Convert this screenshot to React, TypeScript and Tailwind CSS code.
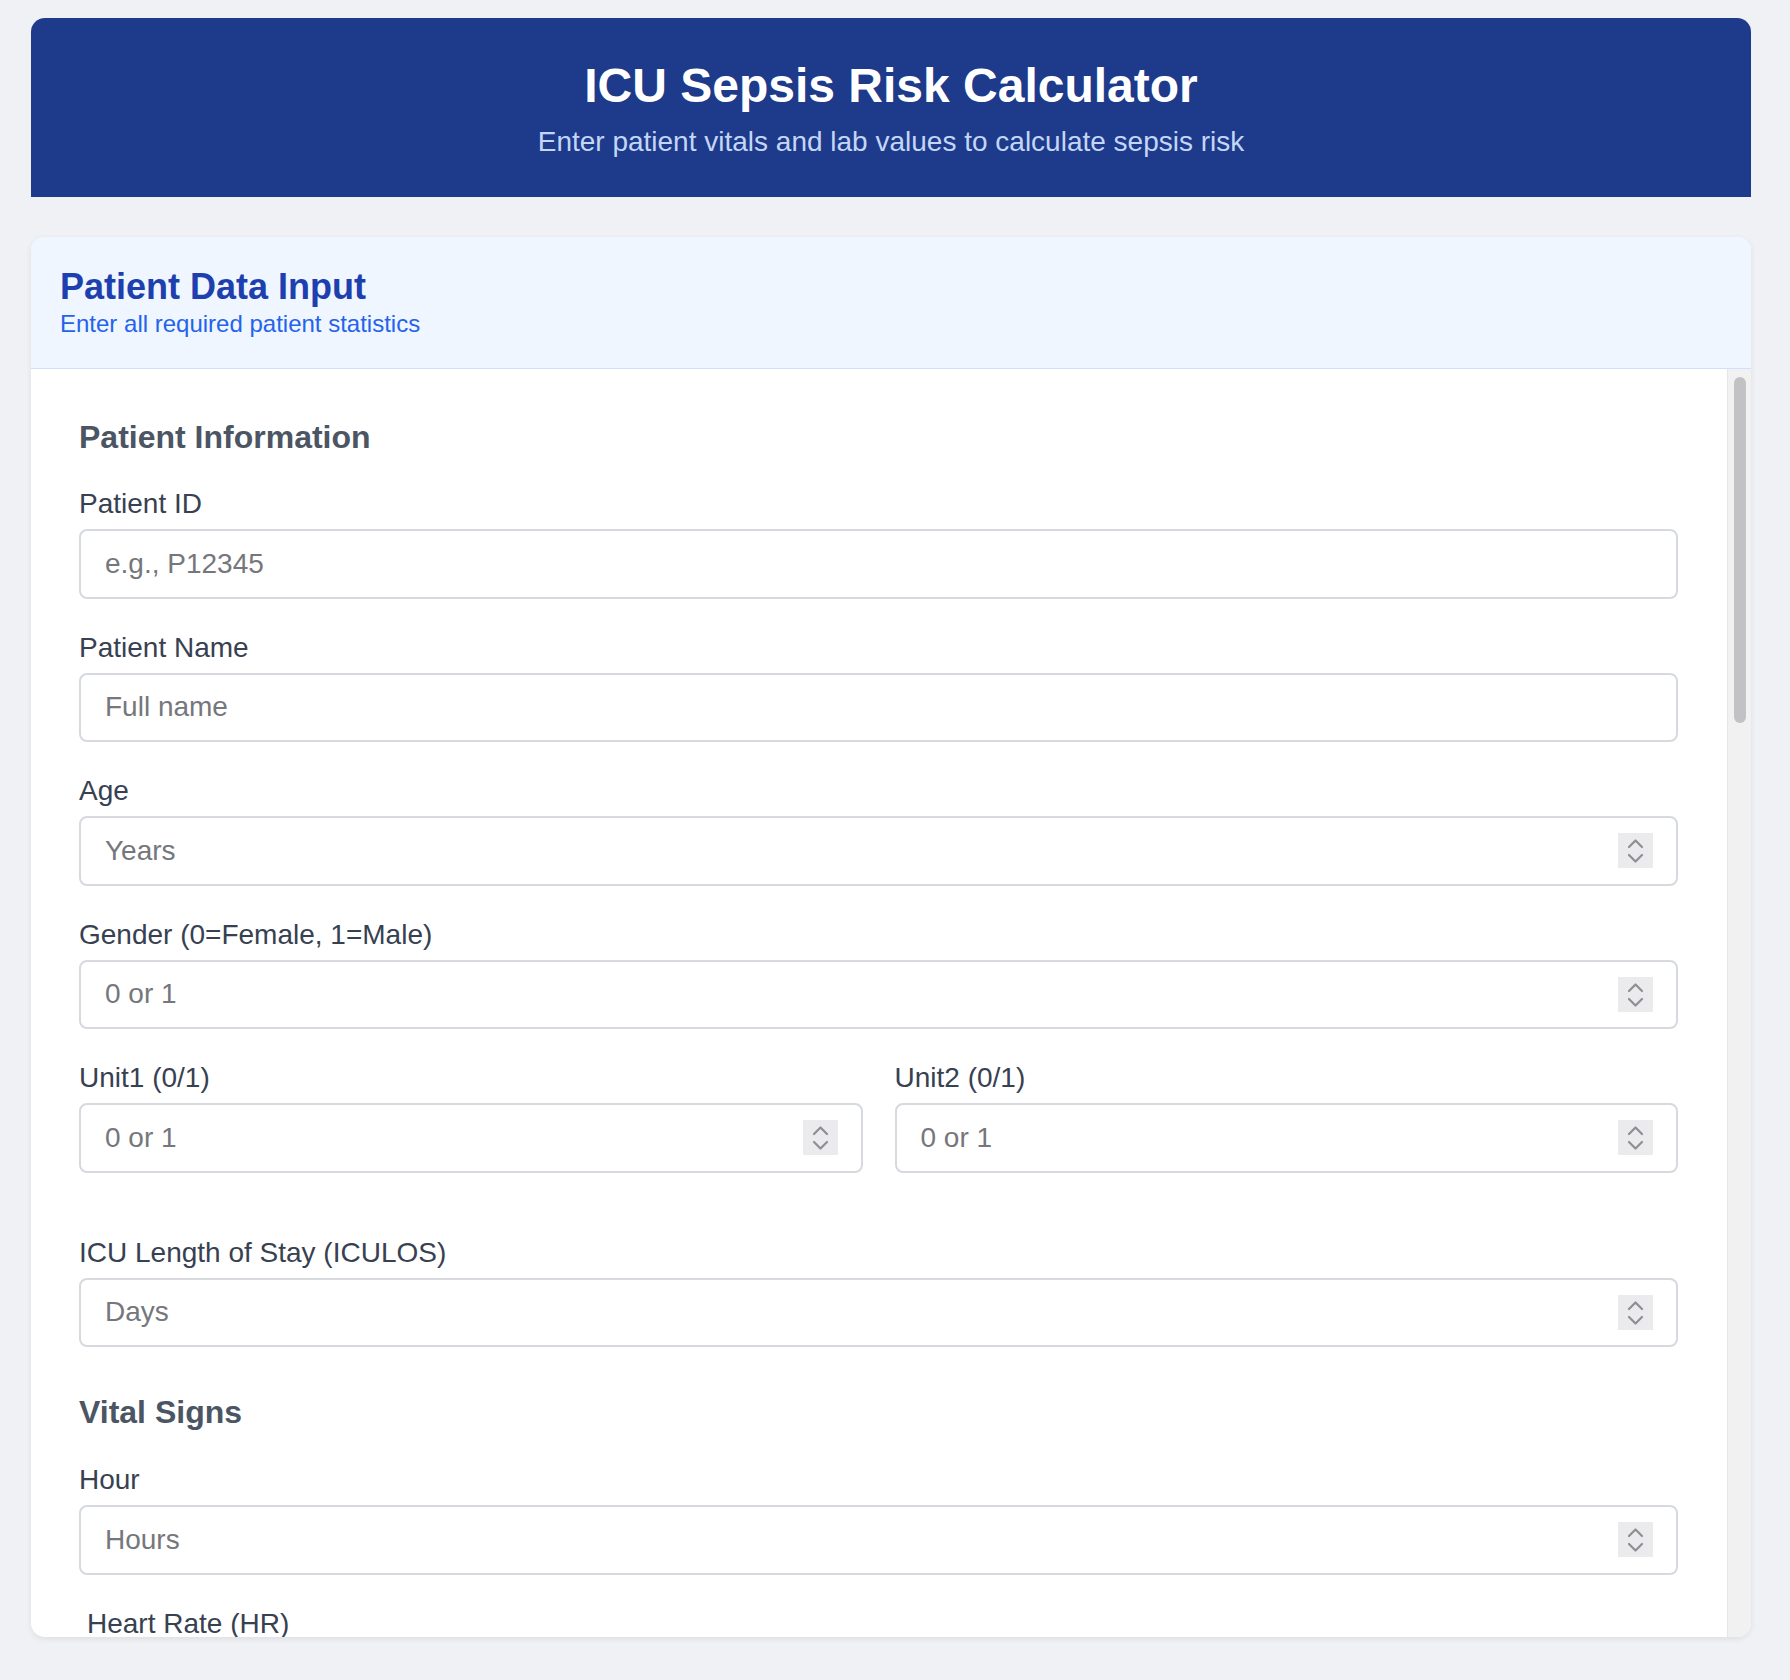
import React from "react";

const Spinner = () => {
  return (
    <div className="flex h-[35px] w-[35px] shrink-0 items-center justify-center bg-[#ebebed]">
      <svg width="35" height="35" viewBox="0 0 35 35" fill="none">
        <path d="M11 14 L17.5 7.5 L24 14" stroke="#8e8e93" strokeWidth="2.2" strokeLinecap="round" strokeLinejoin="round" />
        <path d="M11 22 L17.5 28.5 L24 22" stroke="#8e8e93" strokeWidth="2.2" strokeLinecap="round" strokeLinejoin="round" />
      </svg>
    </div>
  );
};

type FieldProps = {
  label: string;
  placeholder: string;
  numeric?: boolean;
};

const Field = ({ label, placeholder, numeric }: FieldProps) => {
  return (
    <div className="flex flex-col">
      <label className="mb-[8px] text-[28px] leading-[34px] text-[#374151]">{label}</label>
      <div className="flex h-[69.5px] items-center rounded-[8px] border-2 border-[#d6d9de] bg-white pl-[24px] pr-[23px]">
        <input
          type="text"
          inputMode={numeric ? "numeric" : "text"}
          placeholder={placeholder}
          className="min-w-0 flex-1 bg-transparent text-[28px] text-[#111827] outline-none placeholder:text-[#75777c]"
        />
        {numeric && <Spinner />}
      </div>
    </div>
  );
};

const App = () => {
  return (
    <div className="min-h-[1680px] bg-[#f0f1f4] pl-[31px] pr-[39px] pt-[18px] font-['Liberation_Sans',Arial,sans-serif]">
      <header className="rounded-t-[14px] bg-[#1e3a8a] pb-[37px] pt-[39px] text-center">
        <h1 className="text-[48px] font-bold leading-[58px] text-white">ICU Sepsis Risk Calculator</h1>
        <p className="mt-[9px] text-[28px] leading-[36px] text-[#c3d6f7]">
          Enter patient vitals and lab values to calculate sepsis risk
        </p>
      </header>

      <section className="mt-[40px] flex h-[1400px] flex-col overflow-hidden rounded-[14px] bg-white shadow-[0_2px_6px_rgba(0,0,0,0.08)]">
        <div className="border-b border-[#cfe0fb] bg-[#eff6ff] px-[29px] pb-[29px] pt-[28px]">
          <h2 className="text-[36px] font-bold leading-[43px] text-[#1e40af]">Patient Data Input</h2>
          <p className="text-[24px] leading-[31px] text-[#2563eb]">Enter all required patient statistics</p>
        </div>

        <div className="flex min-h-0 flex-1">
          <div className="min-w-0 flex-1 overflow-hidden pl-[48px] pr-[49px] pt-[48px]">
            <h3 className="mb-[30px] text-[32px] font-bold leading-[40px] text-[#4b5563]">Patient Information</h3>
            <div className="flex flex-col gap-[32px]">
              <Field label="Patient ID" placeholder="e.g., P12345" />
              <Field label="Patient Name" placeholder="Full name" />
              <Field label="Age" placeholder="Years" numeric />
              <Field label="Gender (0=Female, 1=Male)" placeholder="0 or 1" numeric />
              <div className="grid grid-cols-2 gap-[32px]">
                <Field label="Unit1 (0/1)" placeholder="0 or 1" numeric />
                <Field label="Unit2 (0/1)" placeholder="0 or 1" numeric />
              </div>
              <div className="mt-[31px]">
                <Field label="ICU Length of Stay (ICULOS)" placeholder="Days" numeric />
              </div>
            </div>

            <h3 className="mb-[31px] mt-[45px] text-[32px] font-bold leading-[40px] text-[#4b5563]">Vital Signs</h3>
            <div className="flex flex-col gap-[32px]">
              <Field label="Hour" placeholder="Hours" numeric />
              <div className="pl-[8px]">
                <label className="text-[28px] leading-[34px] text-[#374151]">Heart Rate (HR)</label>
              </div>
            </div>
          </div>

          <div className="w-[24px] shrink-0 border-l border-[#e6e6e6] bg-[#f1f1f1] pt-[8px]">
            <div className="mx-auto h-[346px] w-[12px] rounded-full bg-[#c2c2c4]" />
          </div>
        </div>
      </section>
    </div>
  );
};

export default App;
